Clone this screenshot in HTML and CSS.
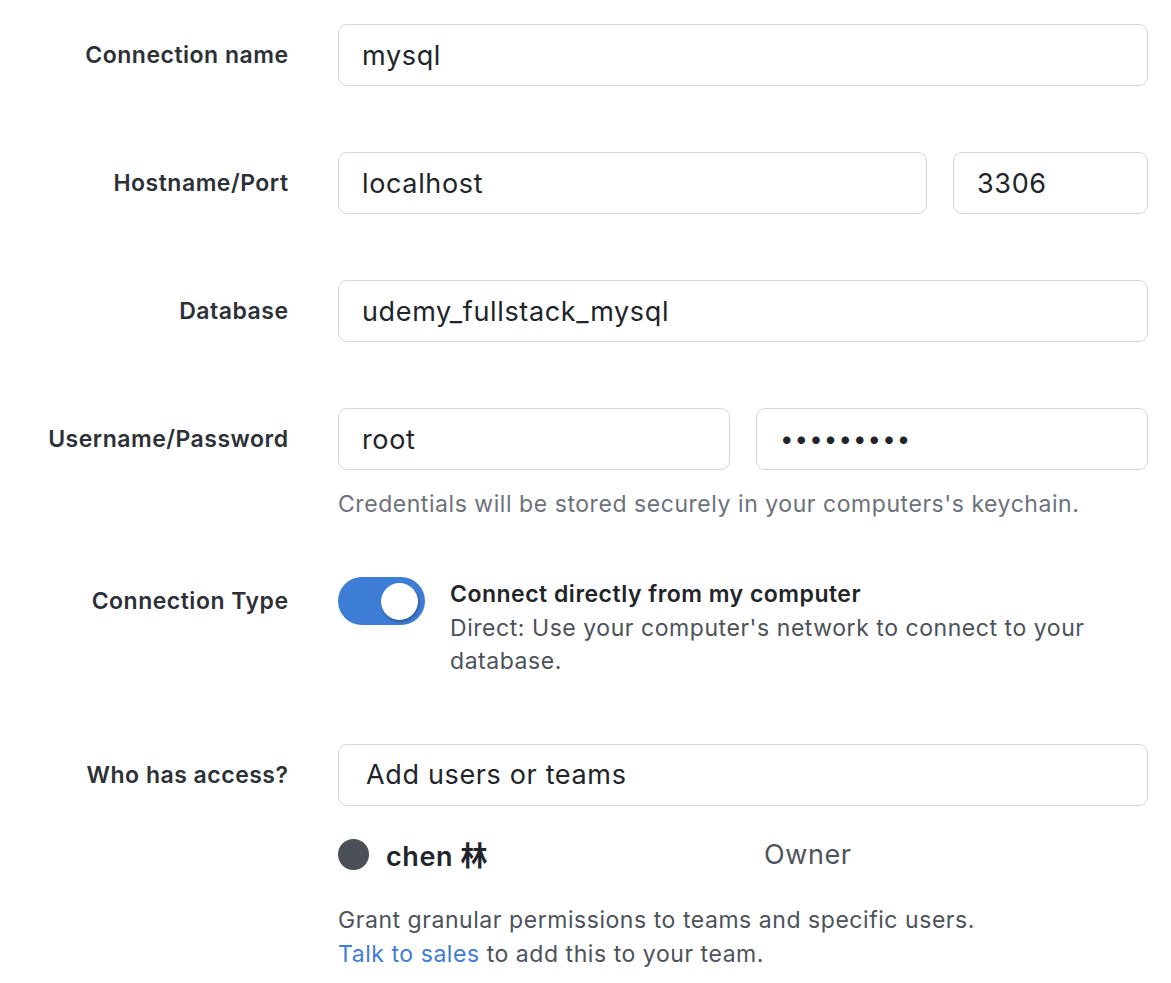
FILE: index.html
```html
<!DOCTYPE html>
<html lang="en">
<head>
<meta charset="utf-8">
<title>Connection</title>
<link rel="stylesheet" href="styles.css">
</head>
<body>
<form class="form">
  <div class="row">
    <label class="label">Connection name</label>
    <div class="field"><input class="input" type="text" value="mysql" readonly></div>
  </div>
  <div class="row">
    <label class="label">Hostname/Port</label>
    <div class="field split">
      <input class="input grow" type="text" value="localhost" readonly>
      <input class="input port" type="text" value="3306" readonly>
    </div>
  </div>
  <div class="row">
    <label class="label">Database</label>
    <div class="field"><input class="input" type="text" value="udemy_fullstack_mysql" readonly></div>
  </div>
  <div class="row row-top">
    <label class="label label-input">Username/Password</label>
    <div class="field">
      <div class="split">
        <input class="input half" type="text" value="root" readonly>
        <div class="input half dots">•••••••••</div>
      </div>
      <p class="hint">Credentials will be stored securely in your computers's keychain.</p>
    </div>
  </div>
  <div class="row row-top type-row">
    <label class="label label-toggle">Connection Type</label>
    <div class="field toggle-field">
      <span class="toggle"><span class="knob"></span></span>
      <div class="toggle-text">
        <div class="toggle-title">Connect directly from my computer</div>
        <div class="toggle-desc">Direct: Use your computer's network to connect to your database.</div>
      </div>
    </div>
  </div>
  <div class="row row-top access-row">
    <label class="label label-input">Who has access?</label>
    <div class="field">
      <input class="input access" type="text" placeholder="Add users or teams">
      <div class="owner">
        <span class="avatar"></span>
        <span class="owner-name">chen 林</span>
        <span class="owner-role">Owner</span>
      </div>
      <p class="grant">Grant granular permissions to teams and specific users.<br><a class="link" href="#">Talk to sales</a> to add this to your team.</p>
    </div>
  </div>
</form>
</body>
</html>
```

FILE: styles.css
```css
* { box-sizing: border-box; }
html, body { margin: 0; padding: 0; background: #ffffff; }
body {
  font-family: Inter, "Noto Sans CJK SC", sans-serif;
  color: #212529;
  letter-spacing: 0.55px;
  width: 1171px;
  height: 983px;
  overflow: hidden;
}
.form {
  display: flex;
  flex-direction: column;
  gap: 66px;
  padding-top: 24px;
}
.row {
  display: grid;
  grid-template-columns: 288px 810px;
  column-gap: 50px;
  align-items: center;
}
.row-top { align-items: start; }
.label {
  text-align: right;
  font-size: 23px;
  font-weight: 600;
  color: #2d3137;
  letter-spacing: 0.5px;
  margin-right: -0.5px;
}
.label-input { line-height: 62px; }
.label-toggle { line-height: 48px; }
.field { min-width: 0; }
.split { display: flex; gap: 26px; }
.input {
  display: block;
  width: 100%;
  height: 62px;
  border: 1.5px solid #d3d7dc;
  border-radius: 9px;
  padding: 0 23px;
  font-family: Inter, "Noto Sans CJK SC", sans-serif;
  font-size: 27px;
  letter-spacing: 0.65px;
  color: #212529;
  background: #fff;
  outline: none;
  line-height: 59px;
}
.grow { flex: 1; }
.port { width: 195px; flex: none; }
.half { flex: 1; width: auto; min-width: 0; }
.dots { letter-spacing: 1.1px; font-size: 24px; color: #212529; }
.hint {
  margin: 18px 0 0;
  font-size: 23px;
  line-height: 33px;
  color: #6c727b;
}
.type-row { margin-top: -10px; }
.toggle-field { display: flex; gap: 25px; align-items: flex-start; }
.toggle {
  position: relative;
  flex: none;
  width: 87px;
  height: 48px;
  border-radius: 24px;
  background: #3d7dd6;
}
.knob {
  position: absolute;
  top: 6px;
  right: 7px;
  width: 37px;
  height: 37px;
  border-radius: 50%;
  background: #fff;
  box-shadow: 1px 2px 3px rgba(0, 0, 0, 0.3);
}
.toggle-text { font-size: 23px; line-height: 33.5px; padding-top: 1px; }
.toggle-title { font-weight: 600; color: #212529; letter-spacing: 0.5px; }
.toggle-desc { color: #4c525a; }
.access-row { margin-top: -1px; }
.access { padding-left: 27px; }
.access::placeholder { color: #212529; opacity: 1; }
.owner {
  display: flex;
  align-items: center;
  height: 40px;
  margin-top: 29px;
  font-size: 27px;
  letter-spacing: 0.6px;
}
.avatar {
  width: 31px;
  height: 31px;
  border-radius: 50%;
  background: #4b4f56;
  flex: none;
}
.owner-name {
  margin-left: 17px;
  width: 378px;
  font-weight: 600;
  color: #212529;
}
.owner-role { color: #50555c; }
.grant {
  margin: 28px 0 0;
  font-size: 23px;
  line-height: 34px;
  color: #4c525a;
}
.link { color: #3d7dd6; text-decoration: none; }
```
